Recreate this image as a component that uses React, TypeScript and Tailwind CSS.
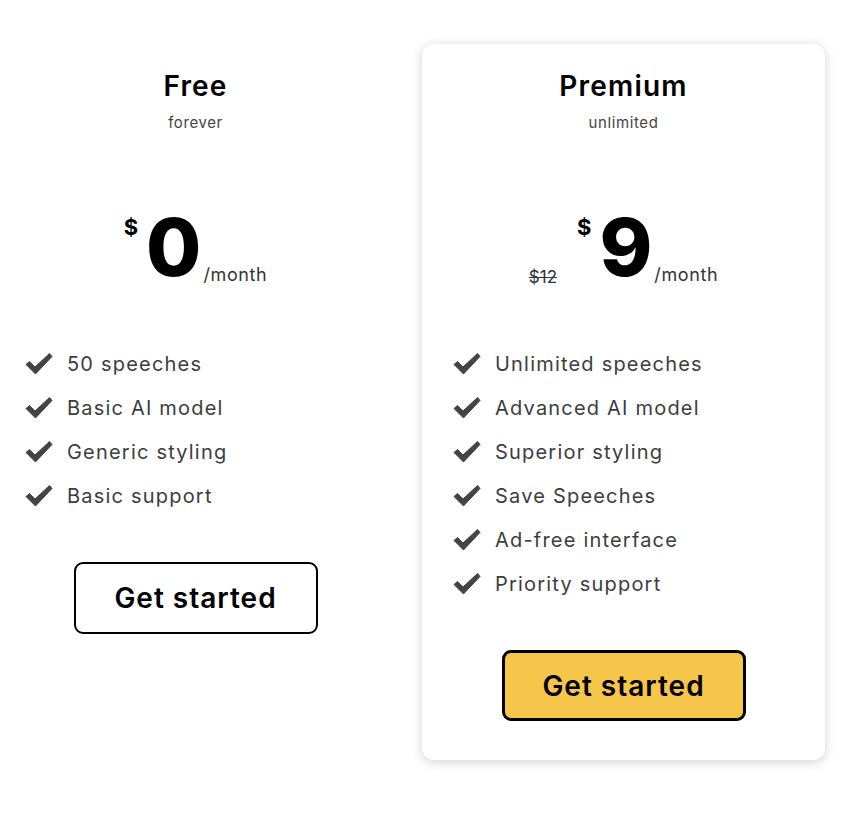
const font = { fontFamily: 'Inter, "Liberation Sans", sans-serif' };

function Check() {
  return (
    <svg width="28" height="22" viewBox="0 0 28 22" className="shrink-0">
      <path d="M1 11.5 L4.5 8.5 L10 14 L24.5 0.5 L27 3.5 L10.5 21 Z" fill="#444444" stroke="#444444" strokeWidth="1" strokeLinejoin="round" />
    </svg>
  );
}

interface PlanProps {
  title: string;
  subtitle: string;
  price: string;
  oldPrice?: string;
  features: string[];
  highlighted?: boolean;
}

function Plan({ title, subtitle, price, oldPrice, features, highlighted }: PlanProps) {
  return (
    <div
      className={
        highlighted
          ? 'w-[403px] shrink-0 flex flex-col items-center pt-[24px] pb-[39px] bg-white rounded-[12px] shadow-[0_2px_12px_rgba(0,0,0,0.18)]'
          : 'w-[403px] shrink-0 flex flex-col items-center pt-[24px] pb-[40px] -ml-[6px]'
      }
    >
      <h2 className="text-[28px] leading-[36px] font-semibold tracking-[1.2px] text-black">{title}</h2>
      <p className="mt-[9px] text-[15px] leading-[20px] tracking-[0.6px] text-[#444]">{subtitle}</p>
      <div className="mt-[74px] flex items-end">
        {oldPrice && (
          <span className="mb-[1px] mr-[20px] text-[17px] leading-none text-[#333] line-through">{oldPrice}</span>
        )}
        <span className="self-start mt-[9px] mr-[8px] text-[22px] leading-none font-bold">$</span>
        <span className="text-[80px] leading-none font-extrabold text-black">{price}</span>
        <span className="mb-[3px] ml-[2px] text-[18px] leading-none tracking-[0.6px] text-[#333]">/month</span>
      </div>
      <ul className="mt-[63px] self-stretch px-[31px] flex flex-col gap-[16px]">
        {features.map((f) => (
          <li key={f} className="flex items-center gap-[14px] h-[28px] text-[20px] text-[#3d3d3d] tracking-[1.2px]">
            <Check />
            <span>{f}</span>
          </li>
        ))}
      </ul>
      <button
        className={
          highlighted
            ? 'mt-[52px] w-[244px] h-[71px] rounded-[9px] border-[3px] border-black bg-[#f5c64a] text-[28px] font-semibold tracking-[1px] text-black'
            : 'mt-[52px] w-[244px] h-[72px] rounded-[9px] border-[2.5px] border-black bg-white text-[28px] font-semibold tracking-[1px] text-black'
        }
      >
        Get started
      </button>
    </div>
  );
}

export default function App() {
  return (
    <div className="min-h-[813px] bg-white pt-[44px]" style={font}>
      <div className="flex items-start gap-[25px]">
        <Plan
          title="Free"
          subtitle="forever"
          price="0"
          features={['50 speeches', 'Basic AI model', 'Generic styling', 'Basic support']}
        />
        <Plan
          title="Premium"
          subtitle="unlimited"
          price="9"
          oldPrice="$12"
          highlighted
          features={[
            'Unlimited speeches',
            'Advanced AI model',
            'Superior styling',
            'Save Speeches',
            'Ad-free interface',
            'Priority support',
          ]}
        />
      </div>
    </div>
  );
}
